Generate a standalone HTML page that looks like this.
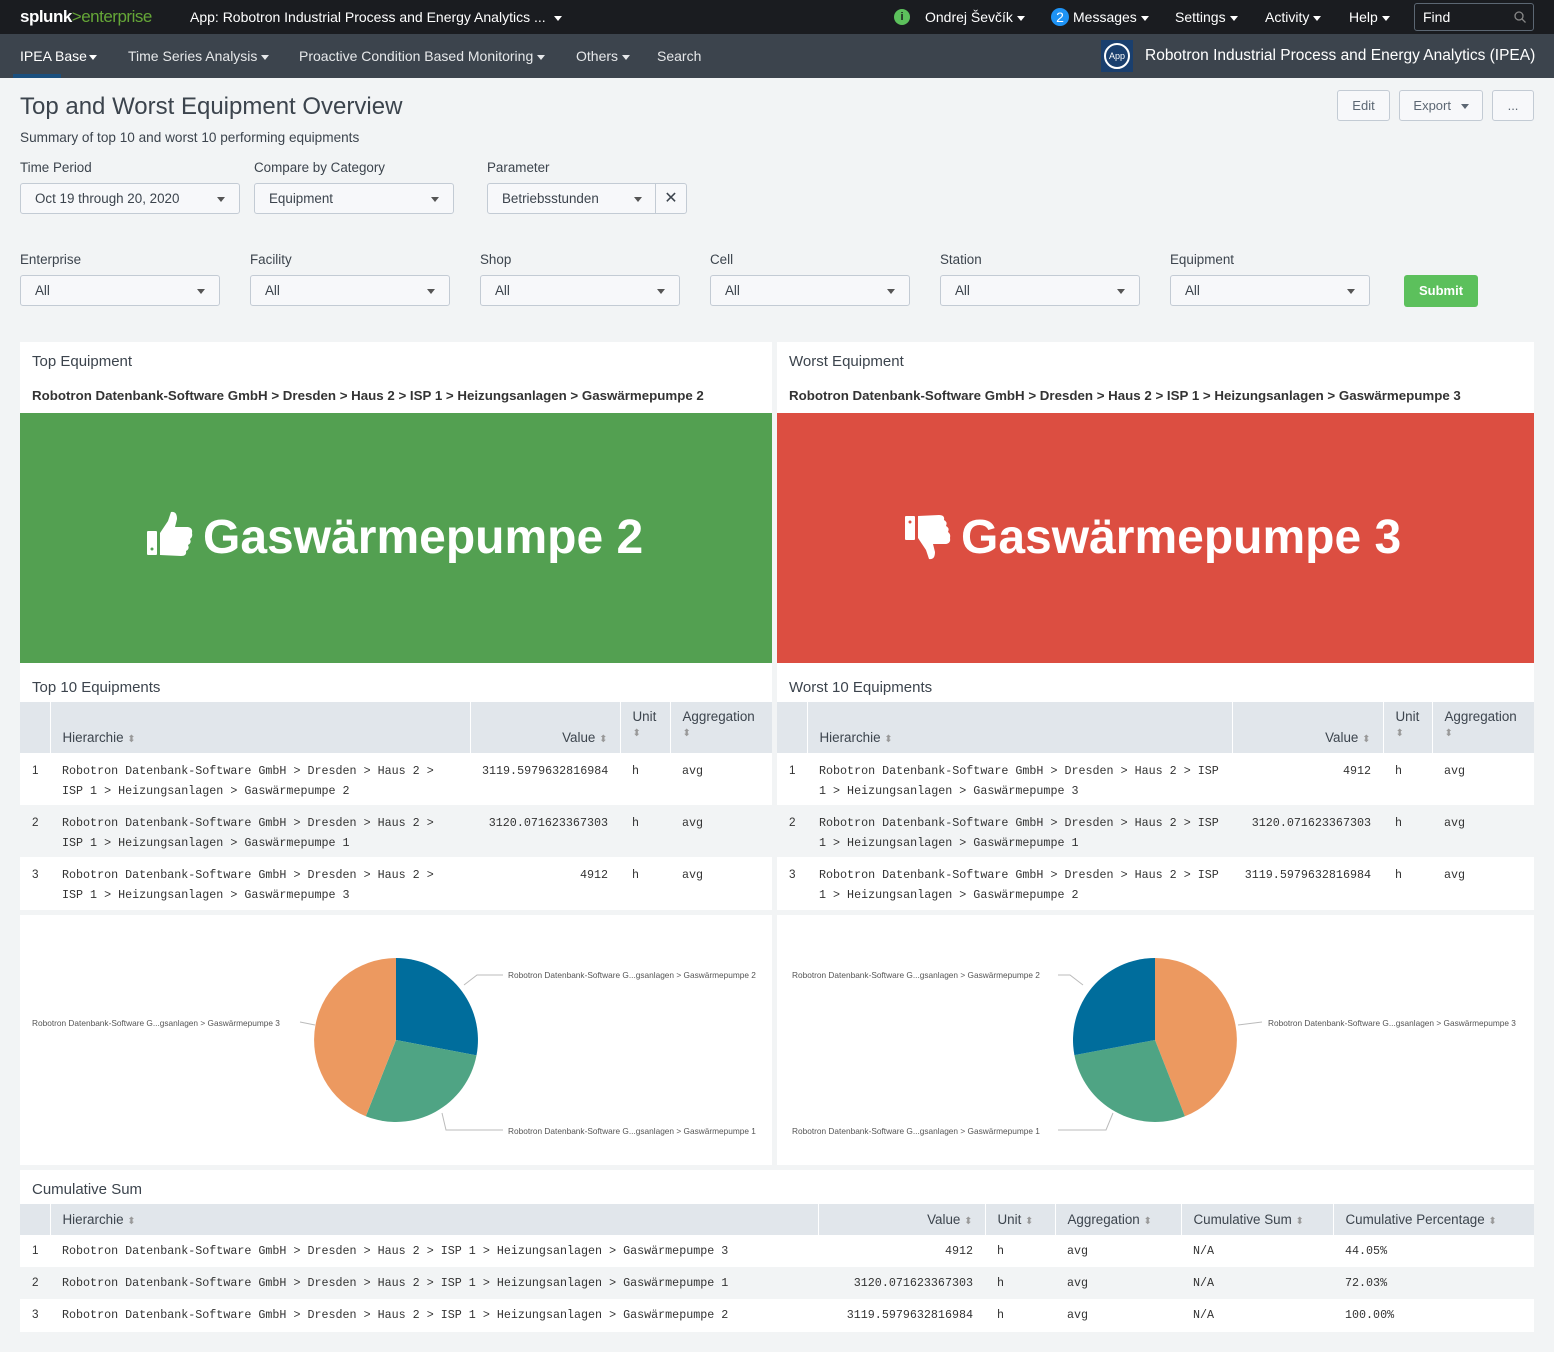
<!DOCTYPE html>
<html><head><meta charset="utf-8"><style>
*{box-sizing:border-box;margin:0;padding:0}
body{width:1554px;height:1352px;background:#f2f4f5;font-family:"Liberation Sans",sans-serif;color:#3c444d;position:relative;overflow:hidden;font-size:13px}
.a{position:absolute}
.top{left:0;top:0;width:1554px;height:34px;background:#1a1c20;color:#fff;font-size:14px}
.nav{left:0;top:34px;width:1554px;height:44px;background:#3c444d;color:#fff;font-size:14px}
.caret{display:inline-block;width:0;height:0;border-left:4px solid transparent;border-right:4px solid transparent;border-top:5px solid currentColor;vertical-align:middle;margin-left:4px}
.lbl{font-size:13.4px;color:#3c444d}
.dd{height:31px;border:1px solid #c3cbd4;border-radius:3px;background:#f7f8fa;font-size:13.4px;padding:0 14px;line-height:29px;color:#3c444d}
.dd .caret{position:absolute;right:14px;top:13px;border-top-color:#555}
.btn{height:31px;border:1px solid #c3cbd4;border-radius:3px;background:#f7f8fa;font-size:13px;line-height:29px;text-align:center;color:#5c6773}
.panel{background:#fff}
.ttl{font-size:15px;color:#3c444d}
.bc{font-size:13.3px;font-weight:bold;color:#333}
table{border-collapse:collapse;table-layout:fixed;position:absolute}
th{background:#e1e6eb;font-weight:normal;font-size:13.4px;color:#3c444d;text-align:left;border-left:1px solid #fff;padding:0 12px;vertical-align:bottom}
th:first-child{border-left:none}
td{font-family:"Liberation Mono",monospace;font-size:11.7px;color:#333;vertical-align:top;padding:8px 12px 0 12px;line-height:20px}
td:first-child{font-family:"Liberation Sans",sans-serif;padding-left:12px}
tr.g td{background:#f2f4f5}
tr.w td{background:#fff}
.s{color:#999;font-size:10px}
.r{text-align:right}
.big{font-size:48px;font-weight:bold;color:#fff}
.pl{font-size:8.3px;fill:#555;font-family:"Liberation Sans",sans-serif}
</style></head><body>
<div class="a top">
 <div class="a" style="left:20px;top:7px;font-size:17px;letter-spacing:-0.5px"><b>splunk</b><span style="color:#65a637">&gt;enterprise</span></div>
 <div class="a" style="left:190px;top:9px">App: Robotron Industrial Process and Energy Analytics ... <span class="caret"></span></div>
 <div class="a" style="left:894px;top:9px;width:16px;height:16px;border-radius:8px;background:#5cc05c;color:#1a1c20;font-size:11px;text-align:center;line-height:16px;font-weight:bold">i</div>
 <div class="a" style="left:925px;top:9px">Ondrej Ševčík<span class="caret"></span></div>
 <div class="a" style="left:1051px;top:8px;width:18px;height:18px;border-radius:9px;background:#1e93f5;text-align:center;line-height:18px">2</div>
 <div class="a" style="left:1073px;top:9px">Messages<span class="caret"></span></div>
 <div class="a" style="left:1175px;top:9px">Settings<span class="caret"></span></div>
 <div class="a" style="left:1265px;top:9px">Activity<span class="caret"></span></div>
 <div class="a" style="left:1349px;top:9px">Help<span class="caret"></span></div>
 <div class="a" style="left:1414px;top:3px;width:120px;height:28px;border:1px solid #5c6773;border-radius:3px;padding:5px 8px">Find<svg class="a" style="right:7px;top:7px" width="12" height="12"><circle cx="5" cy="5" r="4" stroke="#888" fill="none" stroke-width="1.3"/><line x1="8" y1="8" x2="11.5" y2="11.5" stroke="#888" stroke-width="1.3"/></svg></div>
</div>
<div class="a nav">
 <div class="a" style="left:20px;top:14px">IPEA Base<span class="caret" style="margin-left:2px"></span></div>
 <div class="a" style="left:13px;top:40px;width:48px;height:4px;background:#1a4f7e"></div>
 <div class="a" style="left:128px;top:14px;color:#e6e8ea">Time Series Analysis<span class="caret"></span></div>
 <div class="a" style="left:299px;top:14px;color:#e6e8ea">Proactive Condition Based Monitoring<span class="caret"></span></div>
 <div class="a" style="left:576px;top:14px;color:#e6e8ea">Others<span class="caret"></span></div>
 <div class="a" style="left:657px;top:14px;color:#e6e8ea">Search</div>
 <div class="a" style="left:1101px;top:6px;width:32px;height:32px;background:#1a3f6e"><div class="a" style="left:3px;top:3px;width:26px;height:26px;border:2px solid #fff;border-radius:13px;font-size:9px;text-align:center;line-height:22px">App</div></div>
 <div class="a" style="left:1145px;top:13px;font-size:15.5px">Robotron Industrial Process and Energy Analytics (IPEA)</div>
</div>

<div class="a" style="left:20px;top:93px;font-size:24px;color:#3c444d">Top and Worst Equipment Overview</div>
<div class="a" style="left:20px;top:130px;font-size:13.6px">Summary of top 10 and worst 10 performing equipments</div>
<div class="a btn" style="left:1337px;top:90px;width:53px">Edit</div>
<div class="a btn" style="left:1399px;top:90px;width:84px">Export <span class="caret" style="margin-left:6px"></span></div>
<div class="a btn" style="left:1492px;top:90px;width:42px">...</div>

<div class="a lbl" style="left:20px;top:160px">Time Period</div>
<div class="a dd" style="left:20px;top:183px;width:220px">Oct 19 through 20, 2020<span class="caret a"></span></div>
<div class="a lbl" style="left:254px;top:160px">Compare by Category</div>
<div class="a dd" style="left:254px;top:183px;width:200px">Equipment<span class="caret a"></span></div>
<div class="a lbl" style="left:487px;top:160px">Parameter</div>
<div class="a dd" style="left:487px;top:183px;width:170px;border-radius:3px 0 0 3px">Betriebsstunden<span class="caret a"></span></div>
<div class="a dd" style="left:655px;top:183px;width:32px;padding:0;text-align:center;font-size:16px;border-radius:0 3px 3px 0">✕</div>

<div class="a lbl" style="left:20px;top:252px">Enterprise</div>
<div class="a dd" style="left:20px;top:275px;width:200px">All<span class="caret a"></span></div>
<div class="a lbl" style="left:250px;top:252px">Facility</div>
<div class="a dd" style="left:250px;top:275px;width:200px">All<span class="caret a"></span></div>
<div class="a lbl" style="left:480px;top:252px">Shop</div>
<div class="a dd" style="left:480px;top:275px;width:200px">All<span class="caret a"></span></div>
<div class="a lbl" style="left:710px;top:252px">Cell</div>
<div class="a dd" style="left:710px;top:275px;width:200px">All<span class="caret a"></span></div>
<div class="a lbl" style="left:940px;top:252px">Station</div>
<div class="a dd" style="left:940px;top:275px;width:200px">All<span class="caret a"></span></div>
<div class="a lbl" style="left:1170px;top:252px">Equipment</div>
<div class="a dd" style="left:1170px;top:275px;width:200px">All<span class="caret a"></span></div>
<div class="a" style="left:1404px;top:275px;width:74px;height:32px;background:#5cc05c;border-radius:3px;color:#fff;font-weight:bold;font-size:13px;text-align:center;line-height:32px">Submit</div>

<div class="a panel" style="left:20px;top:342px;width:752px;height:568px"></div>
<div class="a panel" style="left:777px;top:342px;width:757px;height:568px"></div>
<div class="a ttl" style="left:32px;top:353px">Top Equipment</div>
<div class="a bc" style="left:32px;top:388px">Robotron Datenbank-Software GmbH &gt; Dresden &gt; Haus 2 &gt; ISP 1 &gt; Heizungsanlagen &gt; Gaswärmepumpe 2</div>
<div class="a ttl" style="left:789px;top:353px">Worst Equipment</div>
<div class="a bc" style="left:789px;top:388px">Robotron Datenbank-Software GmbH &gt; Dresden &gt; Haus 2 &gt; ISP 1 &gt; Heizungsanlagen &gt; Gaswärmepumpe 3</div>

<div class="a" style="left:20px;top:413px;width:752px;height:250px;background:#53a051"></div>
<svg class="a" style="left:146px;top:511px" width="48" height="46" viewBox="0 0 48 46"><rect x="1" y="20" width="10" height="24" rx="1" fill="#fff"/><circle cx="6" cy="38" r="1.5" fill="#53a051"/><path d="M14 22 L22 10 L25 1 Q31 0 31 8 L29 16 L42 16 Q47 17 46 22 Q47 26 44 28 Q46 32 42 34 Q44 38 40 40 Q41 45 35 45 L14 44 Z" fill="#fff"/></svg>
<div class="a big" style="left:203px;top:510px">Gaswärmepumpe 2</div>

<div class="a" style="left:777px;top:413px;width:757px;height:250px;background:#dc4e41"></div>
<svg class="a" style="left:904px;top:514px" width="48" height="46" viewBox="0 0 48 46"><rect x="1" y="2" width="10" height="24" rx="1" fill="#fff"/><circle cx="6" cy="8" r="1.5" fill="#dc4e41"/><path d="M14 24 L22 36 L25 45 Q31 46 31 38 L29 30 L42 30 Q47 29 46 24 Q47 20 44 18 Q46 14 42 12 Q44 8 40 6 Q41 1 35 1 L14 2 Z" fill="#fff"/></svg>
<div class="a big" style="left:961px;top:510px">Gaswärmepumpe 3</div>

<div class="a ttl" style="left:32px;top:679px">Top 10 Equipments</div>
<div class="a ttl" style="left:789px;top:679px">Worst 10 Equipments</div>

<table style="left:20px;top:702px;width:752px">
<colgroup><col style="width:30px"><col style="width:420px"><col style="width:150px"><col style="width:50px"><col style="width:102px"></colgroup>
<tr style="height:51px"><th></th><th style="padding-bottom:8px">Hierarchie <span class="s">⬍</span></th><th class="r" style="padding-bottom:8px">Value <span class="s">⬍</span></th><th style="vertical-align:top;padding-top:7px">Unit<br><span class="s">⬍</span></th><th style="vertical-align:top;padding-top:7px">Aggregation<br><span class="s">⬍</span></th></tr>
<tr class="w" style="height:52px"><td>1</td><td>Robotron Datenbank-Software GmbH &gt; Dresden &gt; Haus 2 &gt; ISP 1 &gt; Heizungsanlagen &gt; Gaswärmepumpe 2</td><td class="r">3119.5979632816984</td><td>h</td><td>avg</td></tr>
<tr class="g" style="height:52px"><td>2</td><td>Robotron Datenbank-Software GmbH &gt; Dresden &gt; Haus 2 &gt; ISP 1 &gt; Heizungsanlagen &gt; Gaswärmepumpe 1</td><td class="r">3120.071623367303</td><td>h</td><td>avg</td></tr>
<tr class="w" style="height:52px"><td>3</td><td>Robotron Datenbank-Software GmbH &gt; Dresden &gt; Haus 2 &gt; ISP 1 &gt; Heizungsanlagen &gt; Gaswärmepumpe 3</td><td class="r">4912</td><td>h</td><td>avg</td></tr>
</table>

<table style="left:777px;top:702px;width:757px">
<colgroup><col style="width:30px"><col style="width:425px"><col style="width:151px"><col style="width:49px"><col style="width:102px"></colgroup>
<tr style="height:51px"><th></th><th style="padding-bottom:8px">Hierarchie <span class="s">⬍</span></th><th class="r" style="padding-bottom:8px">Value <span class="s">⬍</span></th><th style="vertical-align:top;padding-top:7px">Unit<br><span class="s">⬍</span></th><th style="vertical-align:top;padding-top:7px">Aggregation<br><span class="s">⬍</span></th></tr>
<tr class="w" style="height:52px"><td>1</td><td style="padding-right:8px">Robotron Datenbank-Software GmbH &gt; Dresden &gt; Haus 2 &gt; ISP 1 &gt; Heizungsanlagen &gt; Gaswärmepumpe 3</td><td class="r">4912</td><td>h</td><td>avg</td></tr>
<tr class="g" style="height:52px"><td>2</td><td style="padding-right:8px">Robotron Datenbank-Software GmbH &gt; Dresden &gt; Haus 2 &gt; ISP 1 &gt; Heizungsanlagen &gt; Gaswärmepumpe 1</td><td class="r">3120.071623367303</td><td>h</td><td>avg</td></tr>
<tr class="w" style="height:52px"><td>3</td><td style="padding-right:8px">Robotron Datenbank-Software GmbH &gt; Dresden &gt; Haus 2 &gt; ISP 1 &gt; Heizungsanlagen &gt; Gaswärmepumpe 2</td><td class="r">3119.5979632816984</td><td>h</td><td>avg</td></tr>
</table>

<svg class="a" style="left:20px;top:915px" width="752" height="250">
<rect width="752" height="250" fill="#fff"/>
<g transform="translate(-20,-915)">
<path d="M396 1040 L396 958 A82 82 0 0 1 476.5 1055.4 Z" fill="#006d9c"/>
<path d="M396 1040 L476.5 1055.4 A82 82 0 0 1 365.8 1116.2 Z" fill="#4fa484"/>
<path d="M396 1040 L365.8 1116.2 A82 82 0 0 1 396 958 Z" fill="#ec9960"/>
<polyline points="464,985 477,975 503,975" fill="none" stroke="#bbb"/>
<polyline points="442,1113 446,1130 503,1130" fill="none" stroke="#bbb"/>
<polyline points="300,1022 315,1025" fill="none" stroke="#bbb"/>
<text class="pl" x="508" y="978">Robotron Datenbank-Software G...gsanlagen &gt; Gaswärmepumpe 2</text>
<text class="pl" x="508" y="1134">Robotron Datenbank-Software G...gsanlagen &gt; Gaswärmepumpe 1</text>
<text class="pl" x="32" y="1026">Robotron Datenbank-Software G...gsanlagen &gt; Gaswärmepumpe 3</text>
</g></svg>
<svg class="a" style="left:777px;top:915px" width="757" height="250">
<rect width="757" height="250" fill="#fff"/>
<g transform="translate(-777,-915)">
<path d="M1155 1040 L1155 958 A82 82 0 0 1 1184.9 1116.3 Z" fill="#ec9960"/>
<path d="M1155 1040 L1184.9 1116.3 A82 82 0 0 1 1074.4 1055.1 Z" fill="#4fa484"/>
<path d="M1155 1040 L1074.4 1055.1 A82 82 0 0 1 1155 958 Z" fill="#006d9c"/>
<polyline points="1083,985 1070,975 1058,975" fill="none" stroke="#bbb"/>
<polyline points="1113,1113 1106,1130 1058,1130" fill="none" stroke="#bbb"/>
<polyline points="1238,1025 1262,1022" fill="none" stroke="#bbb"/>
<text class="pl" x="792" y="978">Robotron Datenbank-Software G...gsanlagen &gt; Gaswärmepumpe 2</text>
<text class="pl" x="792" y="1134">Robotron Datenbank-Software G...gsanlagen &gt; Gaswärmepumpe 1</text>
<text class="pl" x="1268" y="1026">Robotron Datenbank-Software G...gsanlagen &gt; Gaswärmepumpe 3</text>
</g></svg>

<div class="a panel" style="left:20px;top:1170px;width:1514px;height:162px"></div>
<div class="a ttl" style="left:32px;top:1181px">Cumulative Sum</div>
<table style="left:20px;top:1204px;width:1514px">
<colgroup><col style="width:30px"><col style="width:768px"><col style="width:167px"><col style="width:70px"><col style="width:126px"><col style="width:152px"><col style="width:201px"></colgroup>
<tr style="height:31px"><th></th><th style="vertical-align:middle">Hierarchie <span class="s">⬍</span></th><th class="r" style="vertical-align:middle">Value <span class="s">⬍</span></th><th style="vertical-align:middle">Unit <span class="s">⬍</span></th><th style="vertical-align:middle">Aggregation <span class="s">⬍</span></th><th style="vertical-align:middle">Cumulative Sum <span class="s">⬍</span></th><th style="vertical-align:middle">Cumulative Percentage <span class="s">⬍</span></th></tr>
<tr class="w" style="height:32px"><td style="padding-top:6px">1</td><td style="padding-top:6px">Robotron Datenbank-Software GmbH &gt; Dresden &gt; Haus 2 &gt; ISP 1 &gt; Heizungsanlagen &gt; Gaswärmepumpe 3</td><td class="r" style="padding-top:6px">4912</td><td style="padding-top:6px">h</td><td style="padding-top:6px">avg</td><td style="padding-top:6px">N/A</td><td style="padding-top:6px">44.05%</td></tr>
<tr class="g" style="height:32px"><td style="padding-top:6px">2</td><td style="padding-top:6px">Robotron Datenbank-Software GmbH &gt; Dresden &gt; Haus 2 &gt; ISP 1 &gt; Heizungsanlagen &gt; Gaswärmepumpe 1</td><td class="r" style="padding-top:6px">3120.071623367303</td><td style="padding-top:6px">h</td><td style="padding-top:6px">avg</td><td style="padding-top:6px">N/A</td><td style="padding-top:6px">72.03%</td></tr>
<tr class="w" style="height:32px"><td style="padding-top:6px">3</td><td style="padding-top:6px">Robotron Datenbank-Software GmbH &gt; Dresden &gt; Haus 2 &gt; ISP 1 &gt; Heizungsanlagen &gt; Gaswärmepumpe 2</td><td class="r" style="padding-top:6px">3119.5979632816984</td><td style="padding-top:6px">h</td><td style="padding-top:6px">avg</td><td style="padding-top:6px">N/A</td><td style="padding-top:6px">100.00%</td></tr>
</table>
</body></html>
